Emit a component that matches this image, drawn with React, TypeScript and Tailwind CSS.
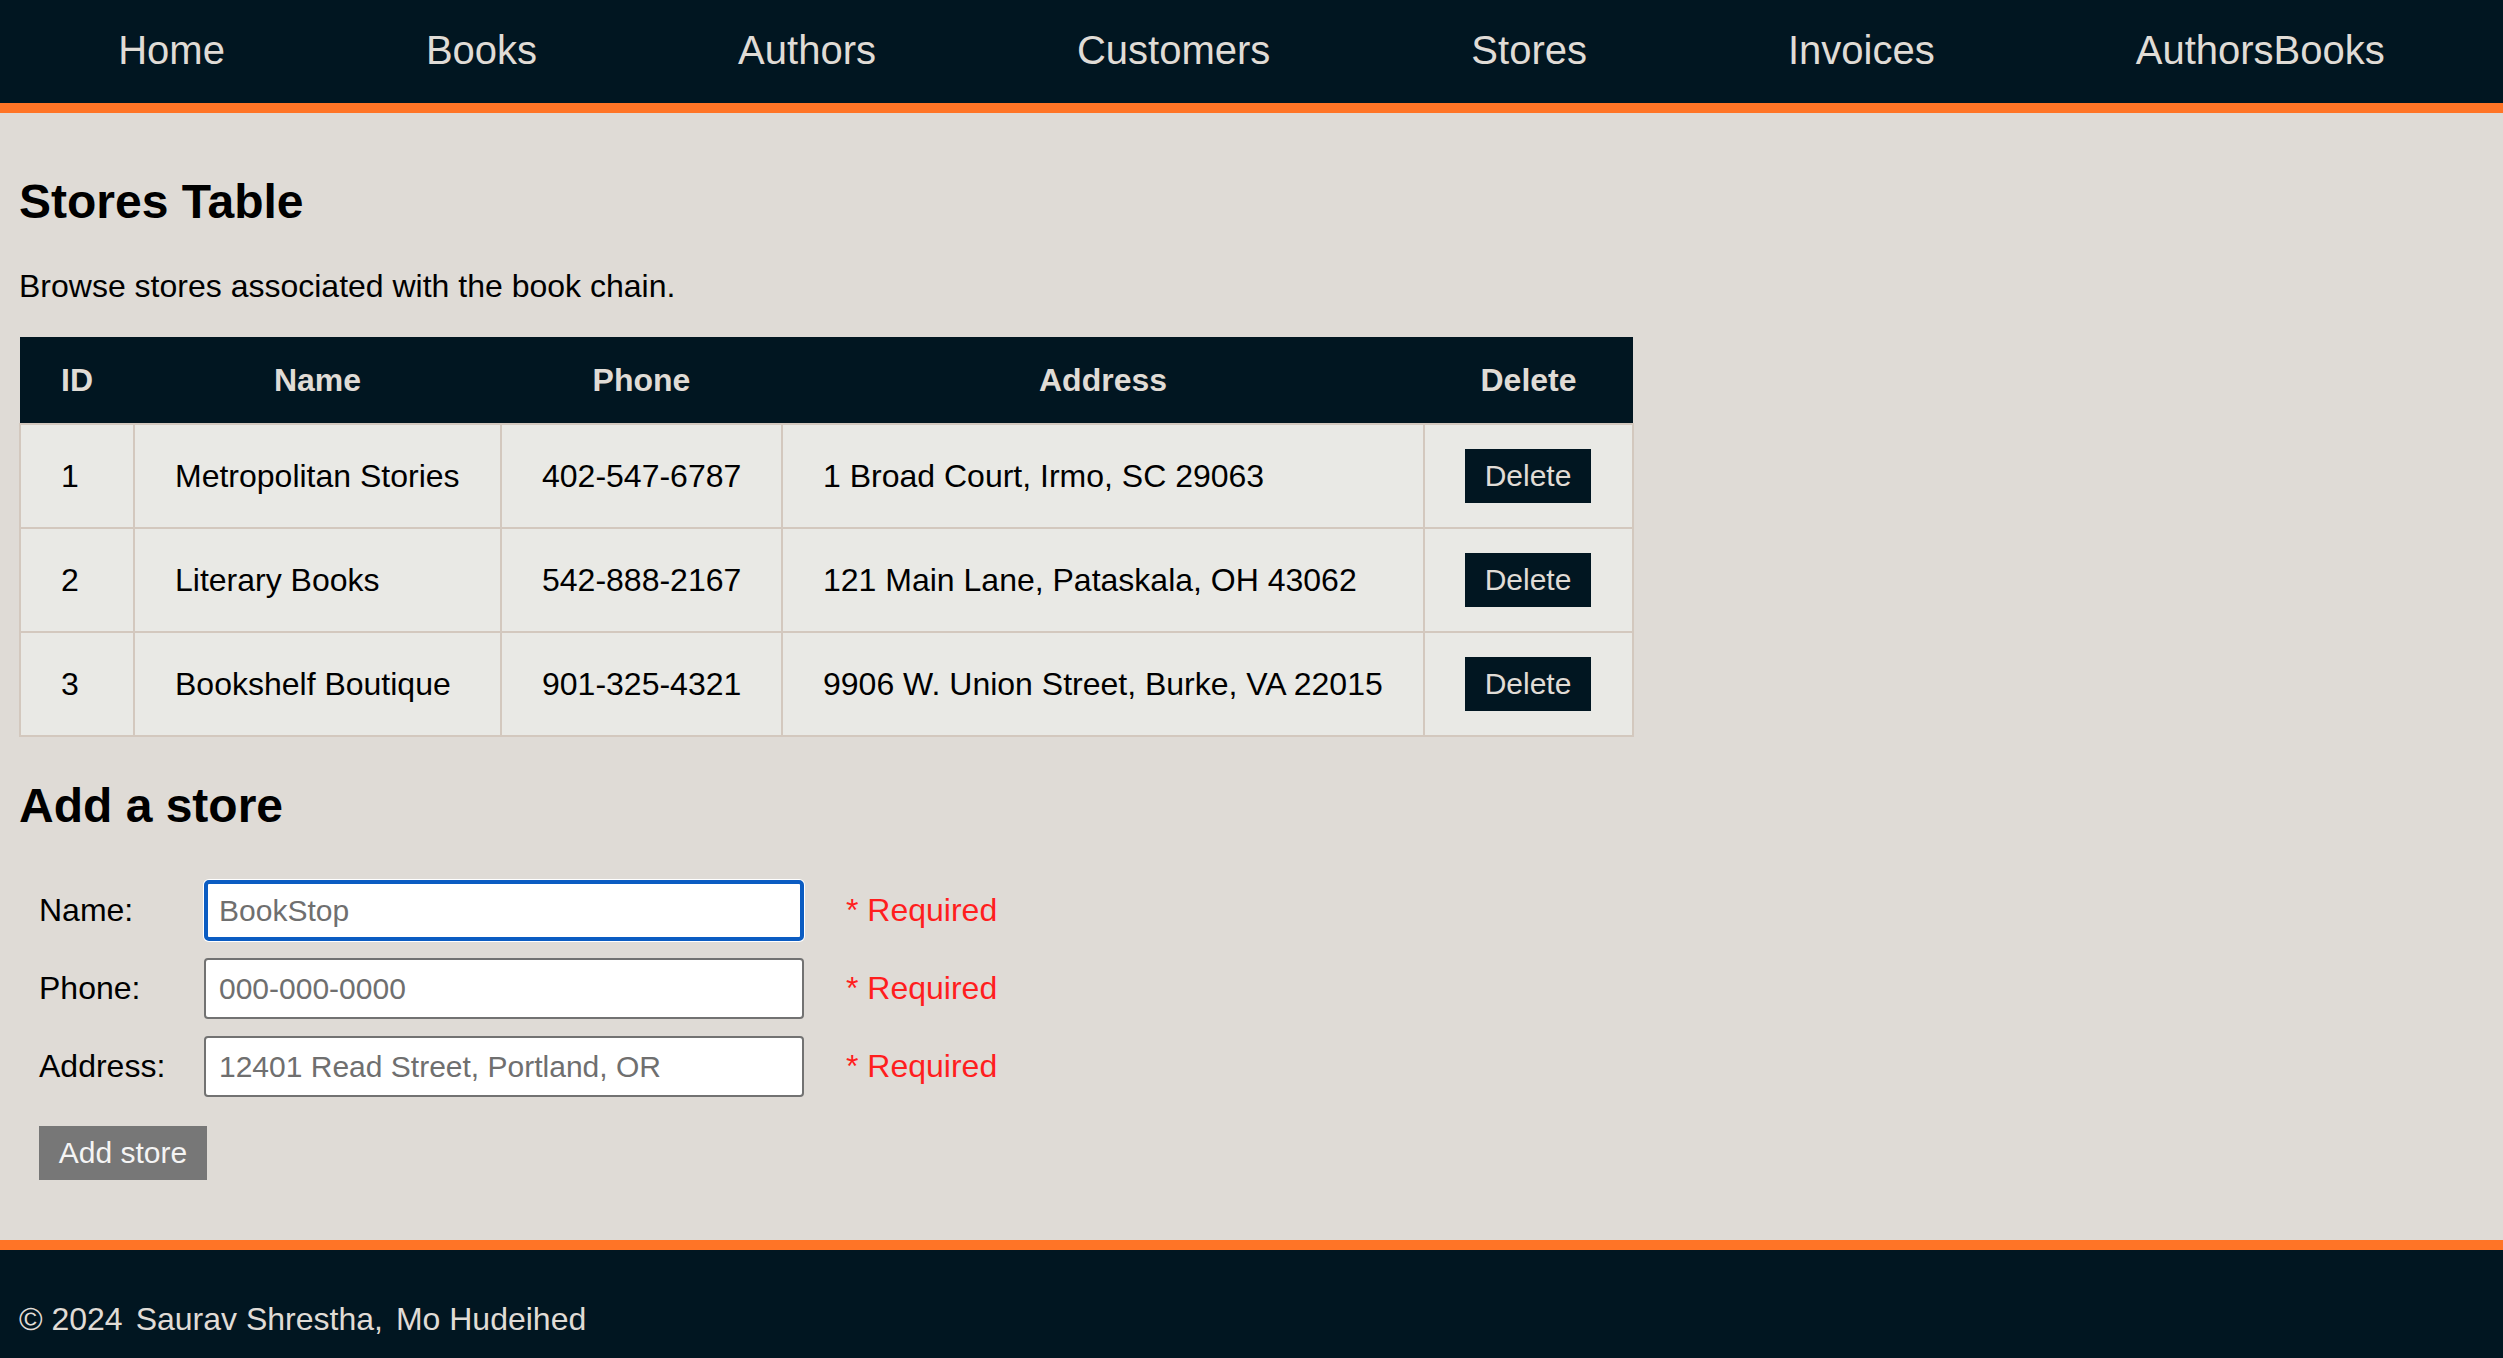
const navLinks = ["Home", "Books", "Authors", "Customers", "Stores", "Invoices", "AuthorsBooks"];

interface Store {
  id: number;
  name: string;
  phone: string;
  address: string;
}

const stores: Store[] = [
  { id: 1, name: "Metropolitan Stories", phone: "402-547-6787", address: "1 Broad Court, Irmo, SC 29063" },
  { id: 2, name: "Literary Books", phone: "542-888-2167", address: "121 Main Lane, Pataskala, OH 43062" },
  { id: 3, name: "Bookshelf Boutique", phone: "901-325-4321", address: "9906 W. Union Street, Burke, VA 22015" },
];

const fields = [
  { label: "Name:", placeholder: "BookStop", focused: true },
  { label: "Phone:", placeholder: "000-000-0000", focused: false },
  { label: "Address:", placeholder: "12401 Read Street, Portland, OR", focused: false },
];

export default function App() {
  return (
    <div className="min-h-screen bg-[#dfdbd6] font-['Liberation_Sans',Arial,sans-serif] text-black">
      {/* Top nav */}
      <nav className="h-[113px] pb-[3px] bg-[#011621] border-b-[10px] border-[#ff7426] flex items-center justify-center gap-[201px]">
        {navLinks.map((link) => (
          <a key={link} href="#" className="text-[40px] leading-[46px] text-[#e0dcd6]">
            {link}
          </a>
        ))}
      </nav>

      <main className="px-[19px] pt-[20px] pb-[60px]">
        <h2 className="mt-[41px] text-[48px] leading-[55px] font-bold">Stores Table</h2>
        <p className="mt-[39px] text-[32px] leading-[37px]">Browse stores associated with the book chain.</p>

        <table className="mt-[32px] border-collapse table-fixed w-[1613px] text-[32px] leading-[37px]">
          <thead>
            <tr className="bg-[#011621] text-[#e0dcd6]">
              <th className="w-[114px] h-[87px] p-0 font-bold text-center">ID</th>
              <th className="w-[367px] h-[87px] p-0 font-bold text-center">Name</th>
              <th className="w-[281px] h-[87px] p-0 font-bold text-center">Phone</th>
              <th className="w-[642px] h-[87px] p-0 font-bold text-center">Address</th>
              <th className="w-[209px] h-[87px] p-0 font-bold text-center">Delete</th>
            </tr>
          </thead>
          <tbody>
            {stores.map((s) => (
              <tr key={s.id} className="bg-[#e9e9e5]">
                <td className="h-[104px] px-[40px] py-0 border-2 border-[#d3c8be] whitespace-nowrap">{s.id}</td>
                <td className="h-[104px] px-[40px] py-0 border-2 border-[#d3c8be] whitespace-nowrap">{s.name}</td>
                <td className="h-[104px] px-[40px] py-0 border-2 border-[#d3c8be] whitespace-nowrap">{s.phone}</td>
                <td className="h-[104px] px-[40px] py-0 border-2 border-[#d3c8be] whitespace-nowrap">{s.address}</td>
                <td className="h-[104px] px-[40px] py-0 border-2 border-[#d3c8be]">
                  <button className="w-[126px] h-[54px] bg-[#011621] text-[#e0dcd6] text-[30px] leading-[34px] flex items-center justify-center">
                    Delete
                  </button>
                </td>
              </tr>
            ))}
          </tbody>
        </table>

        <h2 className="mt-[41px] text-[48px] leading-[55px] font-bold">Add a store</h2>

        <form className="mt-[47px] pl-[20px]" onSubmit={(e) => e.preventDefault()}>
          <div className="grid grid-cols-[125px_600px_auto] gap-x-[40px] gap-y-[17px] items-center">
            {fields.map((f) => (
              <div key={f.label} className="contents">
                <label className="text-[32px] leading-[37px]">{f.label}</label>
                <input
                  type="text"
                  placeholder={f.placeholder}
                  className={
                    f.focused
                      ? "h-[61px] w-[600px] bg-white rounded-[5px] border-[4px] border-[#0b5cc2] shadow-[0_0_0_1px_#ffffff] pl-[11px] text-[30px] placeholder:text-[#6f6f6f] outline-none"
                      : "h-[61px] w-[600px] bg-white rounded-[4px] border-2 border-[#727272] pl-[13px] text-[30px] placeholder:text-[#6f6f6f] outline-none"
                  }
                />
                <span className="pl-[2px] text-[32px] leading-[37px] text-[#ff1e1e]">* Required</span>
              </div>
            ))}
          </div>
          <button type="submit" className="mt-[29px] w-[168px] h-[54px] bg-[#777777] text-[#f4f4f4] text-[30px] leading-[34px]">
            Add store
          </button>
        </form>
      </main>

      {/* Footer */}
      <footer className="bg-[#011621] border-t-[10px] border-[#ff7426] pt-[51px] pb-[40px] px-[19px]">
        <p className="flex gap-[13px] text-[32px] leading-[37px] text-[#e0dcd6]">
          <span>© 2024</span>
          <span>Saurav Shrestha,</span>
          <span>Mo Hudeihed</span>
        </p>
      </footer>
    </div>
  );
}
